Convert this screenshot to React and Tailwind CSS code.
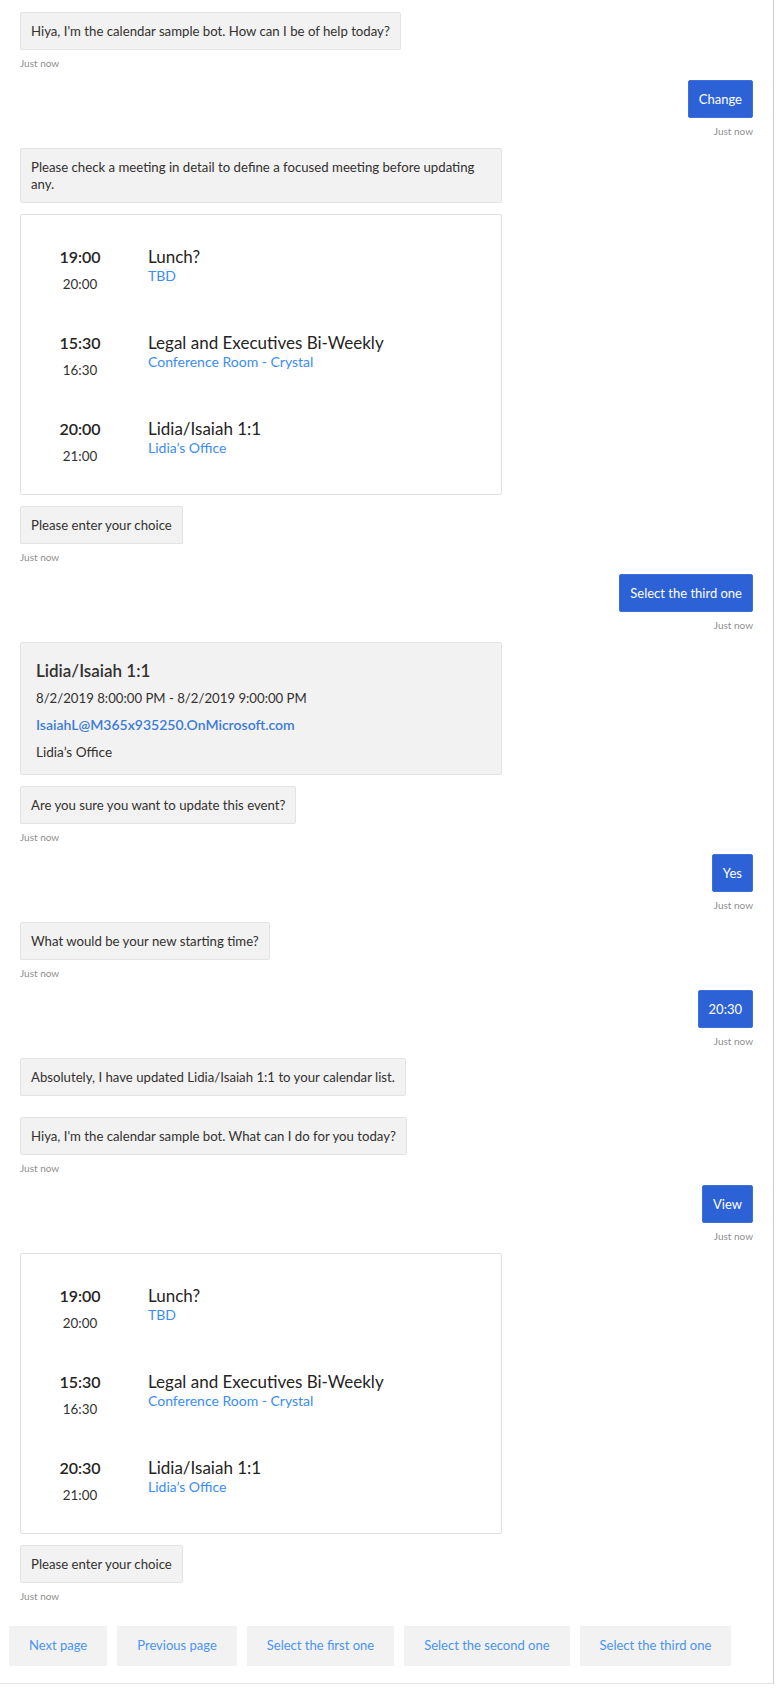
const FONT = { fontFamily: "'Segoe UI', Lato, 'Liberation Sans', sans-serif" };

const meetings = [
  { start: "19:00", end: "20:00", title: "Lunch?", location: "TBD" },
  { start: "15:30", end: "16:30", title: "Legal and Executives Bi-Weekly", location: "Conference Room - Crystal" },
  { start: "20:00", end: "21:00", title: "Lidia/Isaiah 1:1", location: "Lidia\u2019s Office" },
];

const actions = ["Next page", "Previous page", "Select the first one", "Select the second one", "Select the third one"];

function Timestamp({ right }) {
  return (
    <div className={`mt-[6px] h-[14px] text-[10px] leading-[14px] text-[#8f8f8f] ${right ? "text-right" : ""}`}>
      Just now
    </div>
  );
}

function BotBubble({ text, time }) {
  return (
    <div className="flex flex-col items-start">
      <div className="max-w-[482px] rounded-[2px] border border-[#e3e3e3] bg-[#f2f2f2] px-[10px] pt-[10px] pb-[9px] text-[13.2px] leading-[17px] text-[#323130]">
        {text}
      </div>
      {time && <Timestamp />}
    </div>
  );
}

function UserBubble({ text }) {
  return (
    <div className="flex flex-col items-end">
      <div className="rounded-[2px] border border-[#3f6fdc] bg-[#2d62d6] px-[10px] pt-[10px] pb-[9px] text-[13px] leading-[17px] text-white">
        {text}
      </div>
      <Timestamp right />
    </div>
  );
}

function MeetingList({ items }) {
  return (
    <div className="flex w-[482px] flex-col gap-[37px] rounded-[2px] border border-[#e1e1e1] bg-white pt-[30px] pb-[28px]">
      {items.map((m, i) => (
        <div key={i} className="flex">
          <div className="flex w-[118px] flex-col items-center">
            <div className="text-[16px] font-semibold leading-[24px] text-[#252423]">{m.start}</div>
            <div className="mt-[5px] text-[13.4px] leading-[20px] text-[#323130]">{m.end}</div>
          </div>
          <div className="flex flex-col pl-[9px]">
            <div className="text-[17px] leading-[24px] text-[#252423]">{m.title}</div>
            <div className="text-[14px] leading-[14px] text-[#3a8cf6]">{m.location}</div>
          </div>
        </div>
      ))}
    </div>
  );
}

function DetailCard() {
  return (
    <div className="w-[482px] rounded-[2px] border border-[#e3e3e3] bg-[#f2f2f2] px-[15px] pt-[16px] pb-[12px] text-[#323130]">
      <div className="text-[17px] font-semibold leading-[24px]">Lidia/Isaiah 1:1</div>
      <div className="mt-[5px] text-[13.2px] leading-[20px]">8/2/2019 8:00:00 PM - 8/2/2019 9:00:00 PM</div>
      <div className="mt-[7px] text-[14px] font-semibold leading-[20px] text-[#3b7bd9]">IsaiahL@M365x935250.OnMicrosoft.com</div>
      <div className="mt-[7px] text-[13.6px] leading-[20px]">Lidia&rsquo;s Office</div>
    </div>
  );
}

export default function App() {
  const secondList = meetings.map((m, i) => (i === 2 ? { ...m, start: "20:30" } : m));

  return (
    <div style={FONT} className="flex h-[1684px] w-[774px] flex-col border-r border-b border-r-[#cdcdcd] border-b-[#e2e2e2] bg-white">
      {/* Transcript */}
      <div className="flex flex-col px-[20px] pt-[12px]">
        <BotBubble text="Hiya, I'm the calendar sample bot. How can I be of help today?" time />
        <div className="mt-[10px]"><UserBubble text="Change" /></div>
        <div className="mt-[10px]"><BotBubble text="Please check a meeting in detail to define a focused meeting before updating any." /></div>
        <div className="mt-[11px]"><MeetingList items={meetings} /></div>
        <div className="mt-[11px]"><BotBubble text="Please enter your choice" time /></div>
        <div className="mt-[10px]"><UserBubble text="Select the third one" /></div>
        <div className="mt-[10px]"><DetailCard /></div>
        <div className="mt-[11px]"><BotBubble text="Are you sure you want to update this event?" time /></div>
        <div className="mt-[10px]"><UserBubble text="Yes" /></div>
        <div className="mt-[10px]"><BotBubble text="What would be your new starting time?" time /></div>
        <div className="mt-[10px]"><UserBubble text="20:30" /></div>
        <div className="mt-[10px]"><BotBubble text="Absolutely, I have updated Lidia/Isaiah 1:1 to your calendar list." /></div>
        <div className="mt-[21px]"><BotBubble text="Hiya, I'm the calendar sample bot. What can I do for you today?" time /></div>
        <div className="mt-[10px]"><UserBubble text="View" /></div>
        <div className="mt-[10px]"><MeetingList items={secondList} /></div>
        <div className="mt-[11px]"><BotBubble text="Please enter your choice" time /></div>
      </div>

      {/* Suggested actions */}
      <div className="mt-[23px] flex gap-[10px] px-[9px]">
        {actions.map((a) => (
          <button key={a} className="h-[40px] whitespace-nowrap bg-[#f2f2f2] px-[20px] text-[13px] text-[#4a94f2]">
            {a}
          </button>
        ))}
      </div>
    </div>
  );
}
